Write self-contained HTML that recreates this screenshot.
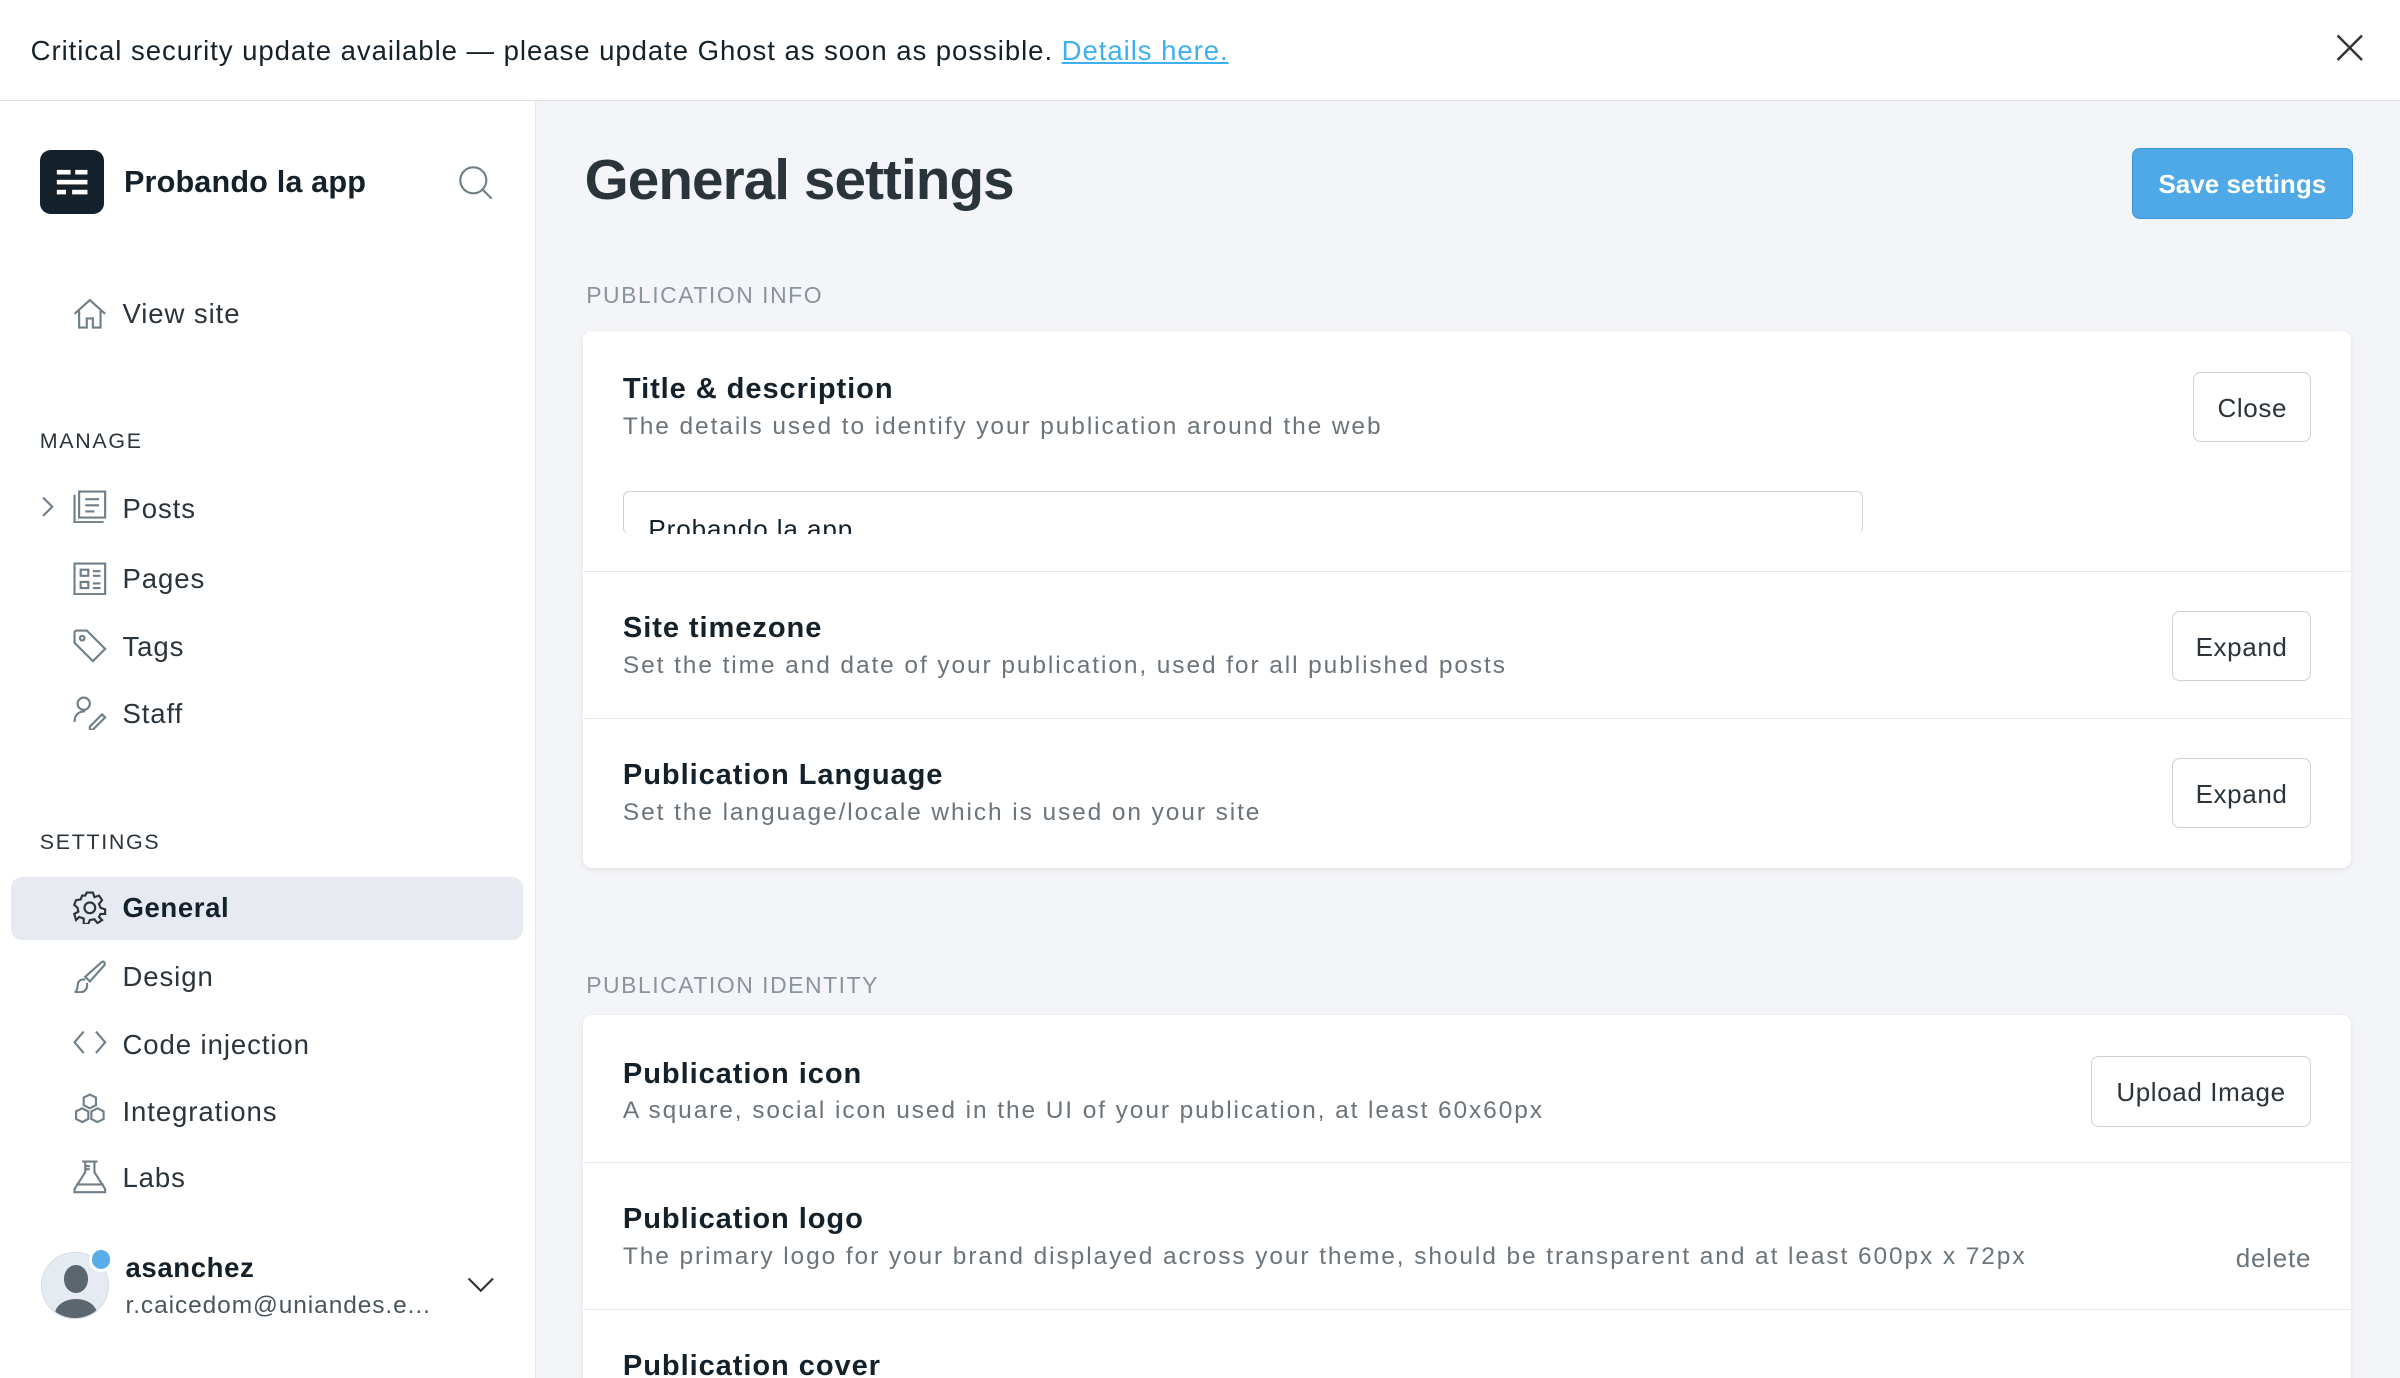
<!DOCTYPE html>
<html><head><meta charset="utf-8"><style>
*{box-sizing:border-box;margin:0;padding:0}
html,body{width:2400px;height:1378px;overflow:hidden}
body{font-family:"Liberation Sans",sans-serif;color:#15212a;background:#f4f5f8}
#z{zoom:1.53061;width:1568px;height:900px;position:relative;overflow:hidden}
.ban{position:absolute;left:0;top:0;width:1568px;height:66px;background:#fff;border-bottom:1px solid #dde1e5;font-size:18px;line-height:66px;padding-left:20px;color:#15212a;letter-spacing:.62px}
.ban a{color:#3eb0ef;text-decoration:underline}
.side{position:absolute;left:0;top:66px;width:350px;height:834px;background:#fff;border-right:1px solid #e3e6ea}
.logo{position:absolute;left:26px;top:32px;width:42px;height:42px;background:#15212a;border-radius:7px}
.brand{position:absolute;left:81px;top:42px;font-size:20px;font-weight:bold;color:#15212a;letter-spacing:.1px}
.nav{position:absolute;left:80px;font-size:18px;color:#2b343b;letter-spacing:.6px;margin-top:1px}
.ico{position:absolute;left:48px}
.hd{position:absolute;left:26px;font-size:14px;letter-spacing:1.1px;color:#2b343b}
.act{position:absolute;left:7px;top:507px;width:335px;height:41px;background:#e7eaf1;border-radius:7px}
.main{position:absolute;left:350px;top:66px;right:0;bottom:0}
h1{position:absolute;left:32px;top:31px;font-size:37px;font-weight:bold;color:#2b343b;letter-spacing:-.6px}
.save{position:absolute;left:1043px;top:31px;width:144px;height:46px;background:#4ea9e6;border:1px solid #3b98d8;border-radius:5px;color:#fff;font-weight:bold;font-size:17px;text-align:center;line-height:46px}
.lbl{position:absolute;left:33px;font-size:15px;letter-spacing:1px;color:#8a949c;margin-top:1px}
.card{position:absolute;left:31px;width:1155px;background:#fff;border-radius:6px;box-shadow:0 1px 4px rgba(0,0,0,.08);overflow:hidden}
.row{position:relative;border-bottom:1px solid #e6e9ec}
.t{position:absolute;left:26px;font-size:19px;font-weight:bold;color:#15212a;letter-spacing:.6px;margin-top:2px}
.d{position:absolute;left:26px;font-size:16px;color:#6b747b;letter-spacing:1.25px;margin-top:2px}
.btn{position:absolute;right:26px;height:46px;border:1px solid #ccd2d7;border-radius:5px;font-size:17px;color:#2b343b;text-align:center;line-height:46px;background:#fff;letter-spacing:.4px}
svg{fill:none;stroke:#6f7f89;stroke-width:1.4}
</style></head><body><div id="z">
<div class="ban">Critical security update available — please update Ghost as soon as possible. <a>Details here.</a>
<svg style="position:absolute;left:1526px;top:22px" width="18" height="18" viewBox="0 0 18 18"><path d="M1 1L17 17M17 1L1 17" stroke="#333" stroke-width="1.6"/></svg></div>
<div class="side">
<div class="logo"><svg width="42" height="42" viewBox="0 0 42 42" style="stroke:none"><g fill="#fff"><rect x="11" y="13" width="9" height="3"/><rect x="23" y="13" width="8" height="3"/><rect x="11" y="19.5" width="20" height="3"/><rect x="11" y="26" width="6" height="3"/><rect x="21" y="26" width="10" height="3"/></g></svg></div>
<div class="brand">Probando la app</div>
<svg style="position:absolute;left:299px;top:42px" width="24" height="24" viewBox="0 0 24 24"><circle cx="10" cy="10" r="8.5"/><path d="M16 16L22 22"/></svg>
<svg class="ico" style="top:128px" width="22" height="22" viewBox="0 0 22 22"><path d="M1 11L11 2L21 11M4 9V20H9V14H13V20H18V9"/></svg>
<div class="nav" style="top:128px">View site</div>
<div class="hd" style="top:214px">MANAGE</div>
<svg style="position:absolute;left:26px;top:258px" width="10" height="14" viewBox="0 0 10 14"><path d="M2 1L8 7L2 13"/></svg>
<svg class="ico" style="top:254px" width="22" height="22" viewBox="0 0 22 22"><path d="M1 3V21H20M4 1H21V18H4Z M8 6H17M8 10H17M8 14H14"/></svg>
<div class="nav" style="top:255px">Posts</div>
<svg class="ico" style="top:301px" width="22" height="22" viewBox="0 0 22 22"><path d="M1 1H21V21H1Z M5 5H10V9H5Z M5 13H10V17H5Z M13 6H18M13 9H18M13 14H18M13 17H18"/></svg>
<div class="nav" style="top:301px">Pages</div>
<svg class="ico" style="top:345px" width="22" height="22" viewBox="0 0 22 22"><path d="M1 2V9L13 21L21 13L9 1H2Z"/><circle cx="6" cy="6" r="1.5"/></svg>
<div class="nav" style="top:345px">Tags</div>
<svg class="ico" style="top:389px" width="22" height="22" viewBox="0 0 22 22"><circle cx="7" cy="5" r="4"/><path d="M1 17C1 12 4 10 8 10M11 20L19 12L21 14L13 22H11Z"/></svg>
<div class="nav" style="top:389px">Staff</div>
<div class="hd" style="top:476px">SETTINGS</div>
<div class="act"></div>
<svg class="ico" style="top:516px;stroke:#2b343b" width="22" height="22" viewBox="0 0 22 22"><circle cx="11" cy="11" r="3.5"/><path d="M9 1H13L14 4L17 3L19 6L17 8.5L18 11L21 12V15L18 15L17 17L19 19L16 21L14 18.5L11 19L10 21.5H7L7 18L4 17L2 19L0.8 15L3.5 13.5L3 11L0.8 9L2 6L5 5.5L6 3L8 3Z"/></svg>
<div class="nav" style="top:516px;font-weight:bold;color:#15212a;letter-spacing:.4px">General</div>
<svg class="ico" style="top:561px" width="22" height="22" viewBox="0 0 22 22"><path d="M20 1C21 2 21 3 20 4L11 14L8 11L18 2C18.5 1.3 19.5 1 20 1ZM8 13C5 12 3 14 3 17C3 19 2 21 1 21H5C8 21 10 18 9 15"/></svg>
<div class="nav" style="top:561px">Design</div>
<svg class="ico" style="top:605px" width="22" height="22" viewBox="0 0 22 22"><path d="M7 3L1 10L7 17M15 3L21 10L15 17"/></svg>
<div class="nav" style="top:605px">Code injection</div>
<svg class="ico" style="top:648px" width="22" height="22" viewBox="0 0 22 22"><path d="M11 1L15 3V8L11 10L7 8V3ZM6 10L10 12V17L6 19L2 17V12ZM16 10L20 12V17L16 19L12 17V12Z"/></svg>
<div class="nav" style="top:649px">Integrations</div>
<svg class="ico" style="top:692px" width="22" height="22" viewBox="0 0 22 22"><path d="M6 1H16M8 1V8L1 19V21H21V19L14 8V1M2 16H20M8 4H11M8 6H11"/></svg>
<div class="nav" style="top:692px">Labs</div>
<div style="position:absolute;left:27px;top:752px;width:44px;height:44px;border-radius:50%;background:#e6ebf1;border:1px solid #d6dce3;overflow:hidden"><div style="position:absolute;left:14px;top:8px;width:16px;height:18px;border-radius:50%;background:#5b666e"></div><div style="position:absolute;left:8px;top:30px;width:28px;height:20px;border-radius:50%;background:#5b666e"></div></div>
<div style="position:absolute;left:58px;top:749px;width:16px;height:16px;border-radius:50%;background:#58aee9;border:2px solid #fff"></div>
<div style="position:absolute;left:82px;top:752px;font-size:18px;font-weight:bold;color:#15212a;letter-spacing:.4px">asanchez</div>
<div style="position:absolute;left:82px;top:778px;font-size:16px;color:#4b555c;letter-spacing:.6px">r.caicedom@uniandes.e...</div>
<svg style="position:absolute;left:305px;top:768px" width="18" height="10" viewBox="0 0 18 10"><path d="M1 1L9 9L17 1" stroke="#333"/></svg>
</div>
<div class="main">
<h1>General settings</h1>
<div class="save">Save settings</div>
<div class="lbl" style="top:117px">PUBLICATION INFO</div>
<div class="card" style="top:150px;height:351px">
<div class="row" style="height:158px"><div class="t" style="top:26px">Title &amp; description</div><div class="d" style="top:52px">The details used to identify your publication around the web</div><div class="btn" style="top:27px;width:77px">Close</div>
<div style="position:absolute;left:26px;top:105px;width:810px;border:1px solid #ccd2d7;border-radius:4px;border-bottom:none;font-size:17px;color:#15212a;padding:14px 16px 0;overflow:hidden;height:28px;line-height:20px;letter-spacing:.6px">Probando la app</div></div>
<div class="row" style="height:96px"><div class="t" style="top:24px">Site timezone</div><div class="d" style="top:50px">Set the time and date of your publication, used for all published posts</div><div class="btn" style="top:25px;width:91px">Expand</div></div>
<div class="row" style="height:97px;border:none"><div class="t" style="top:24px">Publication Language</div><div class="d" style="top:50px">Set the language/locale which is used on your site</div><div class="btn" style="top:25px;width:91px">Expand</div></div>
</div>
<div class="lbl" style="top:568px">PUBLICATION IDENTITY</div>
<div class="card" style="top:597px;height:260px">
<div class="row" style="height:97px"><div class="t" style="top:26px">Publication icon</div><div class="d" style="top:52px">A square, social icon used in the UI of your publication, at least 60x60px</div><div class="btn" style="top:27px;width:144px">Upload Image</div></div>
<div class="row" style="height:96px"><div class="t" style="top:24px">Publication logo</div><div class="d" style="top:50px">The primary logo for your brand displayed across your theme, should be transparent and at least 600px x 72px</div><div style="position:absolute;right:26px;top:52px;font-size:17px;color:#6b747b;letter-spacing:.5px">delete</div></div>
<div class="row" style="height:80px;border:none"><div class="t" style="top:24px">Publication cover</div></div>
</div>
</div>
</div></body></html>
